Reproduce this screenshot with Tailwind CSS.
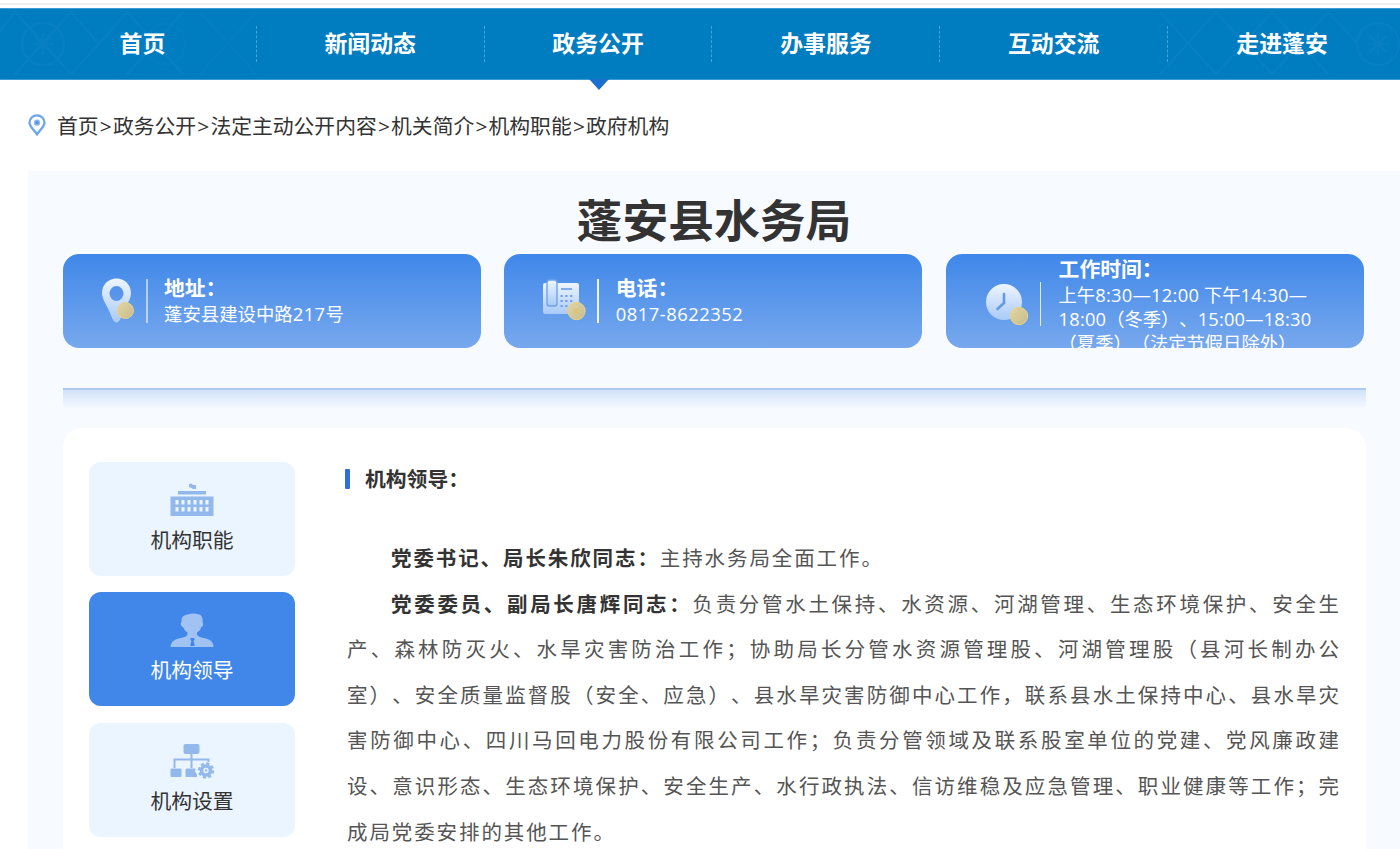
<!DOCTYPE html>
<html lang="zh-CN">
<head>
  <meta charset="UTF-8" />
  <meta name="viewport" content="width=device-width, initial-scale=1.0" />
  <title>蓬安县水务局</title>
  <script src="https://cdn.jsdelivr.net/npm/@tailwindcss/browser@4"></script>
</head>

<body class="h-[849px] overflow-hidden bg-white text-[#333] font-['Open_Sans','Noto_Sans_CJK_SC',sans-serif] [text-spacing-trim:space-all]">

    <div class="h-2 pt-[3px]"><div class="h-[2px] bg-[#eeeeee]"></div></div>

    <!-- Navbar -->
    <nav class="relative h-[72px] bg-[#007cc1] border-y border-[#3e9dd3]">
        <svg class="absolute inset-0 w-full h-full" viewBox="0 0 1400 70" fill="none" stroke="#1287c8" stroke-width="2.5" opacity=".4">
            <circle cx="43" cy="35" r="21"/><path d="M43 24v22M32 35h22M35 27l16 16M51 27L35 43"/>
            <path d="M-10 35L15 3l56 62M15 65L71 3l28 32-28 30M99 35L127 3l56 62M127 65L183 3"/>
            <circle cx="165" cy="35" r="20" opacity=".5"/>
            <path d="M200 65L256 3M200 3l56 62" opacity=".6"/>
            <path d="M1160 3l56 62M1160 65l56-62 56 62M1216 65l56-62 56 62M1272 65l56-62 30 32"/>
            <circle cx="1378" cy="35" r="21"/><path d="M1378 24v22M1367 35h22M1370 27l16 16M1386 27l-16 16"/>
        </svg>
        <ul class="relative ml-[29px] w-[1367px] h-full grid grid-cols-6 items-center text-center text-[22.9px] font-bold text-white">
            <li class="h-9 leading-9 border-r border-dashed border-[#45a3dc]"><a href="#">首页</a></li>
            <li class="h-9 leading-9 border-r border-dashed border-[#45a3dc]"><a href="#">新闻动态</a></li>
            <li class="h-9 leading-9 border-r border-dashed border-[#45a3dc]"><a href="#">政务公开</a></li>
            <li class="h-9 leading-9 border-r border-dashed border-[#45a3dc]"><a href="#">办事服务</a></li>
            <li class="h-9 leading-9 border-r border-dashed border-[#45a3dc]"><a href="#">互动交流</a></li>
            <li class="h-9 leading-9"><a href="#">走进蓬安</a></li>
        </ul>
        <svg class="absolute left-[589px] top-[70px] w-5 h-[11px]" viewBox="0 0 20 11"><path d="M0 0h20L10 11z" fill="#1b6fcf"/></svg>
    </nav>

    <!-- Breadcrumb -->
    <div class="h-[91px] pl-[28px] flex items-center">
        <svg class="w-[18px] h-[22px] mr-[11px] -mt-[2px]" viewBox="0 0 18 22" fill="none" stroke="#6ba5ee" stroke-width="2.3">
            <path d="M9 20.3C6.500 16.500 1.500 12.500 1.500 8.700a7.500 7.300 0 0 1 15 0c0 3.800-5 7.800-7.500 11.600z"/>
            <circle cx="9" cy="8.700" r="2.400" fill="#4d8de4" stroke="#8bbaf2" stroke-width="1.500"/>
        </svg>
        <p class="flex text-[20.8px] leading-[30px] whitespace-nowrap">
            <a href="#">首页</a><span class="w-[14.3px] text-center">&gt;</span><a href="#">政务公开</a><span class="w-[14.3px] text-center">&gt;</span><a href="#">法定主动公开内容</a><span class="w-[14.3px] text-center">&gt;</span><a href="#">机关简介</a><span class="w-[14.3px] text-center">&gt;</span><a href="#">机构职能</a><span class="w-[14.3px] text-center">&gt;</span><a href="#">政府机构</a>
        </p>
    </div>

    <main class="ml-[28px] pl-[35px] h-[678px] bg-[#f7faff]">
        <!-- Title -->
        <h1 class="w-[1302px] h-[83px] pt-[16px] text-center text-[45.8px] leading-[66px] font-bold">蓬安县水务局</h1>

        <!-- Contact cards -->
        <section class="flex gap-[23.3px] text-white whitespace-nowrap">
            <div class="w-[418px] h-[94px] shrink-0 rounded-2xl bg-linear-to-b from-[#3e87e9] to-[#77a8ed] flex items-center pl-[37px] overflow-hidden">
                <svg class="w-[36px] h-[46px]" viewBox="0 0 36 46">
                    <defs>
                        <linearGradient id="pale" x1="0" y1="0" x2="0" y2="1"><stop stop-color="#eef5ff"/><stop offset="1" stop-color="#a9caf8"/></linearGradient>
                        <linearGradient id="gold" x1="0" y1="0" x2="1" y2="1"><stop stop-color="#e2d5a2"/><stop offset="1" stop-color="#c9bc8d"/></linearGradient>
                    </defs>
                    <path d="M16.500 0.500C8 .5 2 7 2 15c0 6 4 11 7 17.500 2 4.500 4 12 7.500 12S22 37 24 32.500c3-6.500 7-11.500 7-17.500C31 7 25 .5 16.500.5zm0 7.500a7 7.500 0 1 1 0 15 7 7.500 0 0 1 0-15z" fill="url(#pale)" fill-rule="evenodd"/>
                    <circle cx="25.500" cy="32.500" r="8" fill="url(#gold)" stroke="#e6d384"/>
                </svg>
                <div class="w-[2px] h-[44px] ml-[10px] mr-[16px] bg-white/55"></div>
                <div>
                    <h2 class="text-[20.8px] leading-[27px] font-bold">地址：</h2>
                    <p class="text-[18.4px] leading-[24.500px]">蓬安县建设中路<span class="tracking-[0.400px]">217</span>号</p>
                </div>
            </div>
            <div class="w-[418px] h-[94px] shrink-0 rounded-2xl bg-linear-to-b from-[#3e87e9] to-[#77a8ed] flex items-center pl-[38px] overflow-hidden">
                <svg class="w-[44px] h-[44px] -mt-[2px]" viewBox="0 0 44 44">
                    <rect x="1" y="5" width="36" height="31" rx="2" fill="url(#pale)"/>
                    <rect x="5" y="2" width="10" height="26" rx="2.500" fill="url(#pale)" stroke="#6ea2ec" stroke-width="1.400"/>
                    <path d="M19 11h11" stroke="#5f97e8" stroke-width="1.600"/>
                    <path d="M18.500 18h14M18.500 23h14M18.500 28h12" stroke="#6d9fe9" stroke-width="2.200" stroke-dasharray="2.200 2.600"/>
                    <circle cx="34.500" cy="33" r="8.700" fill="url(#gold)" stroke="#e6d384"/>
                    <circle cx="34.500" cy="33" r="3" fill="#dcc37c" opacity=".7"/>
                </svg>
                <div class="w-[2px] h-[44px] ml-[11px] mr-[16.500px] bg-white/90"></div>
                <div>
                    <h2 class="text-[20.8px] leading-[27px] font-bold">电话：</h2>
                    <p class="text-[18.4px] leading-[24.500px] tracking-[0.500px]">0817-8622352</p>
                </div>
            </div>
            <div class="w-[418px] h-[94px] shrink-0 rounded-2xl bg-linear-to-b from-[#3e87e9] to-[#77a8ed] flex items-start pl-[39px] overflow-hidden">
                <svg class="w-[45px] h-[44px] mt-[29px]" viewBox="0 0 45 44">
                    <circle cx="19" cy="19" r="18" fill="url(#pale)"/>
                    <path d="M19 11v9l-6.500 6" fill="none" stroke="#6499e5" stroke-width="2.600" stroke-linecap="round"/>
                    <circle cx="34" cy="33" r="8.700" fill="url(#gold)" stroke="#e6d384"/>
                </svg>
                <div class="w-px h-[44px] mt-[28px] ml-[10px] mr-[18px] bg-white/80"></div>
                <div class="pt-[1.500px]">
                    <h2 class="text-[20.8px] leading-[27px] font-bold">工作时间：</h2>
                    <p class="text-[18.3px] leading-[24.200px]">上午<span class="tracking-[0.300px]">8:30—12:00</span> 下午<span class="tracking-[0.300px]">14:30—</span><br><span class="tracking-[0.200px]">18:00</span>（冬季）、<span class="tracking-[0.200px]">15:00—18:30</span><br>（夏季）（法定节假日除外）</p>
                </div>
            </div>
        </section>

        <!-- Divider -->
        <div class="w-[1303px] h-[21px] mt-[40px] mb-[19px] border-t-2 border-[#b0c9ef] bg-linear-to-b from-[#d1e2f9] to-[#f7faff]"></div>

        <section class="w-[1303px] h-[430px] rounded-t-[20px] bg-white flex pt-[34px] pl-[26px]">
            <!-- Side menu -->
            <ul class="w-[206px] flex flex-col gap-[16.400px] text-[20.8px] leading-[30px]">
                <li class="h-[114px] shrink-0 rounded-xl bg-[#ebf5ff] flex flex-col items-center pt-[20px]">
                    <svg class="w-[44px] h-[36px]" viewBox="0 0 44 36" fill="#93b8ec">
                        <path d="M19 2l2.500-.5L23 3h3v4h-3l-1.500-1L19 5zM8 9h28v3.500H8z"/>
                        <path fill-rule="evenodd" d="M.5 14.500h43V34H.5zM5.500 18v4.500h3V18zm6 0v4.500h3V18zm6 0v4.500h3V18zm6 0v4.500h3V18zm6 0v4.500h3V18zm6 0v4.500h3V18zm-30 7v4.500h3V25zm6 0v4.500h3V25zm6 0v4.500h3V25zm6 0v4.500h3V25zm6 0v4.500h3V25zm6 0v4.500h3V25z"/>
                    </svg>
                    <span class="mt-[7px]">机构职能</span>
                </li>
                <li class="h-[114px] shrink-0 rounded-xl bg-[#4087e9] text-white flex flex-col items-center pt-[20px]">
                    <svg class="w-[44px] h-[36px]" viewBox="0 0 44 36" fill="#a0c3f4">
                        <path fill-rule="evenodd" d="M.5 35c.3-6 5-8 10-9 5-.8 7.500-2 7-5.500-2.500-1.500-3.500-3-4-5-2.500-1-3.500-4-2-5.500C11 5 14 3 17.500 2.500c4-1.500 9-1 13 .5 2 2 2.500 4 2 7 1.500 2 .5 4.500-1.500 5.500-.5 2-1.500 3.500-4 5-.5 3.500 2 4.700 7 5.500 5 1 9.500 3 9.500 9zM20.500 26v2l1 1-1 3v2h4v-2l-1-3 1-1v-2z"/>
                    </svg>
                    <span class="mt-[7px]">机构领导</span>
                </li>
                <li class="h-[114px] shrink-0 rounded-xl bg-[#ebf5ff] flex flex-col items-center pt-[20px]">
                    <svg class="w-[45px] h-[36px]" viewBox="0 0 45 36" fill="#93b8ec">
                        <rect x="13.500" y="1" width="16" height="10" rx="2"/>
                        <path d="M21.500 11v14M4.500 25v-8.500h34V19" fill="none" stroke="#93b8ec" stroke-width="2"/>
                        <rect x=".5" y="25.500" width="11" height="8.500" rx="1"/>
                        <path d="M16.500 25.500h9l-.5 3 2 3V34H15.500v-7.500z"/>
                        <circle cx="36" cy="27.500" r="4.500" fill="none" stroke="#93b8ec" stroke-width="3.600"/>
                        <circle cx="36" cy="27.500" r="7.100" fill="none" stroke="#93b8ec" stroke-width="2.200" stroke-dasharray="3.200 2.376"/>
                        <circle cx="36" cy="27.500" r="1.200"/>
                    </svg>
                    <span class="mt-[7px]">机构设置</span>
                </li>
            </ul>

            <!-- Leaders -->
            <article class="ml-[50px] w-[996px]">
                <div class="flex items-center h-[33px]">
                    <div class="w-[5px] h-[20px] rounded-[1px] bg-[#2f6fdb]"></div>
                    <h3 class="ml-[15px] text-[20.8px] leading-[30px] font-bold">机构领导：</h3>
                </div>
                <div class="mt-[41px] ml-[2px] w-[994px] text-[20.5px] leading-[45.600px] text-[#555] tracking-[1.900px] whitespace-nowrap">
                    <p class="pl-[44px]"><b class="text-[#333]">党委书记、局长朱欣同志：</b>主持水务局全面工作。</p>
                    <p>
                        <span class="block pl-[44px] [text-align-last:justify]"><b class="text-[#333]">党委委员、副局长唐辉同志：</b>负责分管水土保持、水资源、河湖管理、生态环境保护、安全生</span>
                        <span class="block [text-align-last:justify]">产、森林防灭火、水旱灾害防治工作；协助局长分管水资源管理股、河湖管理股（县河长制办公</span>
                        <span class="block [text-align-last:justify]">室）、安全质量监督股（安全、应急）、县水旱灾害防御中心工作，联系县水土保持中心、县水旱灾</span>
                        <span class="block [text-align-last:justify]">害防御中心、四川马回电力股份有限公司工作；负责分管领域及联系股室单位的党建、党风廉政建</span>
                        <span class="block [text-align-last:justify]">设、意识形态、生态环境保护、安全生产、水行政执法、信访维稳及应急管理、职业健康等工作；完</span>
                        <span class="block">成局党委安排的其他工作。</span>
                    </p>
                </div>
            </article>
        </section>
    </main>

</body>
</html>
